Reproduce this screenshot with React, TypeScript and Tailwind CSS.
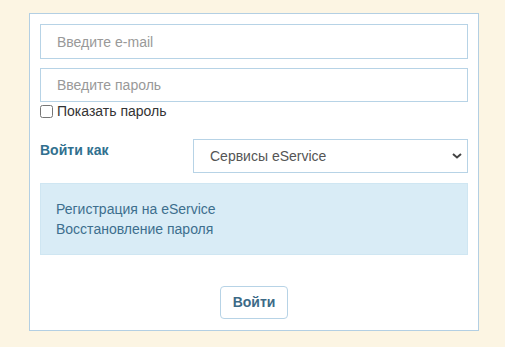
import { useState } from "react";

const font = { fontFamily: '"Liberation Sans", Arial, sans-serif' };

export default function App() {
  const [showPassword, setShowPassword] = useState(false);

  return (
    <div className="min-h-[347px] bg-[#fcf5e3] pl-[29px] pt-[13px]" style={font}>
      <form className="w-[450px] border border-[#b3cfe3] bg-white px-[10px] pt-[10px] pb-[11px] text-[14px]">
        <input
          type="email"
          placeholder="Введите e-mail"
          className="block h-[35px] w-full border border-[#b7d3e6] px-[16px] text-[14px] text-[#555] outline-none placeholder:text-[#999]"
        />
        <input
          type={showPassword ? "text" : "password"}
          placeholder="Введите пароль"
          className="mt-[9px] block h-[34px] w-full border border-[#b7d3e6] px-[16px] text-[14px] text-[#555] outline-none placeholder:text-[#999]"
        />
        <label className="flex h-[18px] items-center gap-[4px] text-[14px] text-[#333]">
          <input
            type="checkbox"
            checked={showPassword}
            onChange={(event) => setShowPassword(event.target.checked)}
            className="m-0 h-[13px] w-[13px]"
          />
          Показать пароль
        </label>

        <div className="mt-[19px] flex items-start justify-between">
          <span className="pt-[1px] text-[14px] font-bold text-[#31708f]">Войти как</span>
          <div className="relative w-[275px]">
            <select className="block h-[34px] w-full appearance-none border border-[#b7d3e6] bg-white pl-[16px] text-[14px] text-[#555] outline-none">
              <option>Сервисы eService</option>
            </select>
            <svg className="pointer-events-none absolute right-[6px] top-[14px]" width="10" height="6" viewBox="0 0 10 6">
              <path d="M1 1l4 3.5L9 1" fill="none" stroke="#444" strokeWidth="2" />
            </svg>
          </div>
        </div>

        <div className="mt-[10px] border border-[#cfe6f2] bg-[#d9ecf6] px-[15px] py-[15px] text-[14px] leading-[20px] text-[#3d6f8e]">
          <a href="#" className="block">Регистрация на eService</a>
          <a href="#" className="block">Восстановление пароля</a>
        </div>

        <div className="mt-[31px] flex justify-center">
          <button type="button" className="h-[33px] w-[68px] rounded-[4px] border border-[#b7d3e6] bg-white text-[14px] font-bold text-[#3c6a87]">
            Войти
          </button>
        </div>
      </form>
    </div>
  );
}
